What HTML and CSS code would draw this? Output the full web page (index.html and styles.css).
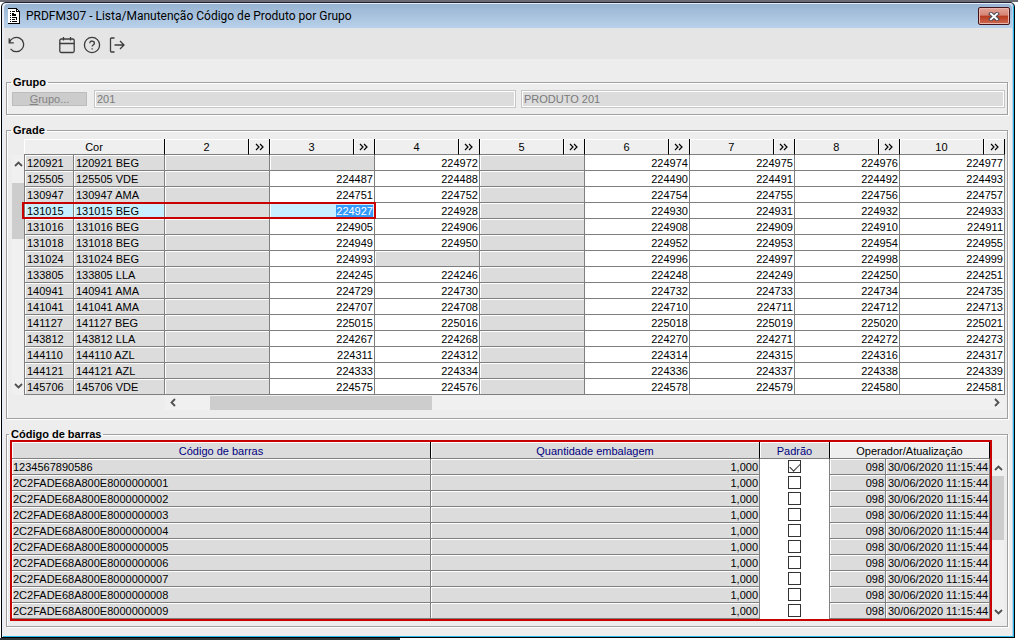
FILE: index.html
```html
<!DOCTYPE html>
<html lang="pt-BR">
<head>
<meta charset="UTF-8">
<meta name="viewport" content="width=device-width, initial-scale=1.0">
<title>PRDFM307 - Lista/Manutenção Código de Produto por Grupo</title>
<link rel="stylesheet" href="styles.css">
</head>
<body>

<div class="window">
  <!-- Title bar -->
  <header class="titlebar">
    <svg class="app-icon" width="13" height="17" viewBox="0 0 13 17" shape-rendering="crispEdges">
      <path d="M0 0h9v1h1v1h1v1h1v13H0z" fill="#fff"/>
      <path d="M0 0h9v1H0zM9 1h1v1H9zM10 2h1v1h-1zM11 3h1v13h-1zM0 15h12v1H0zM8 1h1v3H8zM8 3h3v1H8z" fill="#000"/>
      <path d="M2 3h1v1H2zM4 3h3v1H4zM2 5h1v1H2zM4 5h2v1H4zM2 7h1v1H2zM4 6h4v2H4zM2 9h1v1H2zM4 9h5v1H4zM2 11h1v1H2zM4 11h3v1H4zM8 10h1v2H8zM2 13h1v1H2zM4 13h5v1H4z" fill="#000"/>
    </svg>
    <h1>PRDFM307 - Lista/Manutenção Código de Produto por Grupo</h1>
    <button class="close" type="button" aria-label="Fechar">
      <svg width="12" height="9" viewBox="0 0 12 9">
        <path d="M3 1.8l6 5.4M9 1.8L3 7.2" stroke="#4a4a58" stroke-width="4" stroke-linecap="square"/>
        <path d="M3 1.8l6 5.4M9 1.8L3 7.2" stroke="#fff" stroke-width="2" stroke-linecap="square"/>
      </svg>
    </button>
  </header>

  <!-- Toolbar -->
  <nav class="toolbar">
    <button class="undo" type="button" aria-label="Desfazer">
      <svg width="18" height="18" viewBox="0 0 18 18"><path d="M1.2 2.2v4.6h4.6M1.4 6.8a7.2 7.2 0 1 1 1.2 6"/></svg>
    </button>
    <button type="button" aria-label="Calendário">
      <svg width="18" height="18" viewBox="0 0 18 18"><rect x="1.8" y="3" width="14.4" height="13.5" rx="1.5"/><path d="M1.8 7.5h14.4M5.5 1v3.5M12.5 1v3.5"/></svg>
    </button>
    <button type="button" aria-label="Ajuda">
      <svg width="18" height="18" viewBox="0 0 18 18"><circle cx="9" cy="9" r="7.6"/><path d="M6.8 7.2c0-3 4.6-2.8 4.6 0 0 1.7-2.3 1.7-2.3 3.3M9.1 12.2v1.3"/></svg>
    </button>
    <button type="button" aria-label="Sair">
      <svg width="18" height="18" viewBox="0 0 18 18"><path d="M6.5 2H3.5a1 1 0 0 0-1 1v12a1 1 0 0 0 1 1h3M6.5 9h9.5M12 5l4 4-4 4"/></svg>
    </button>
  </nav>

  <main class="content">
    <fieldset class="group">
      <legend>Grupo</legend>
      <div class="group-row">
        <button class="group-button" type="button" disabled><u>G</u>rupo...</button>
        <input class="field" type="text" value="201" aria-label="Código do grupo" disabled>
        <input class="field wide" type="text" value="PRODUTO 201" aria-label="Descrição do grupo" disabled>
      </div>
    </fieldset>

    <fieldset class="grade">
      <legend>Grade</legend>
      <div class="grade-row">
        <div class="scroll-v left">
          <svg width="9" height="6" viewBox="0 0 9 6"><path d="M1 5l3.5-3.5L8 5"/></svg>
          <div class="thumb"></div>
          <svg width="9" height="6" viewBox="0 0 9 6"><path d="M1 1l3.5 3.5L8 1"/></svg>
        </div>
        <div class="grid-wrap">
          <table class="grid">
            <colgroup id="grade-cols"><col class="col-code"><col class="col-name"></colgroup>
            <thead><tr id="grade-head"><th colspan="2">Cor</th></tr></thead>
            <tbody id="grade-body"></tbody>
          </table>
          <div class="row-marker"></div>
        </div>
      </div>
      <div class="scroll-h">
        <svg width="6" height="9" viewBox="0 0 6 9"><path d="M5 1L1.5 4.5 5 8"/></svg>
        <div class="thumb"></div>
        <svg width="6" height="9" viewBox="0 0 6 9"><path d="M1 1l3.5 3.5L1 8"/></svg>
      </div>
    </fieldset>

    <fieldset class="barcodes">
      <legend>Código de barras</legend>
      <div class="barcode-row">
        <div class="barcode-box">
          <table class="grid">
            <colgroup><col><col class="col-qty"><col class="col-default"><col class="col-user"><col class="col-date"></colgroup>
            <thead>
              <tr><th class="link">Código de barras</th><th class="link">Quantidade embalagem</th><th class="link">Padrão</th><th colspan="2">Operador/Atualização</th></tr>
            </thead>
            <tbody id="barcode-body"></tbody>
          </table>
        </div>
        <div class="scroll-v">
          <svg width="9" height="6" viewBox="0 0 9 6"><path d="M1 5l3.5-3.5L8 5"/></svg>
          <div class="thumb"></div>
          <svg width="9" height="6" viewBox="0 0 9 6"><path d="M1 1l3.5 3.5L8 1"/></svg>
        </div>
      </div>
    </fieldset>
  </main>
</div>
<div class="taskbar"></div>

<script>
  const sizes = [2, 3, 4, 5, 6, 7, 8, 10];

  // code, colour, then one product code per size (0 = no product)
  const grade = [
    ['120921', 'BEG', 0, 0, 224972, 0, 224974, 224975, 224976, 224977],
    ['125505', 'VDE', 0, 224487, 224488, 0, 224490, 224491, 224492, 224493],
    ['130947', 'AMA', 0, 224751, 224752, 0, 224754, 224755, 224756, 224757],
    ['131015', 'BEG', 0, 224927, 224928, 0, 224930, 224931, 224932, 224933],
    ['131016', 'BEG', 0, 224905, 224906, 0, 224908, 224909, 224910, 224911],
    ['131018', 'BEG', 0, 224949, 224950, 0, 224952, 224953, 224954, 224955],
    ['131024', 'BEG', 0, 224993, 0, 0, 224996, 224997, 224998, 224999],
    ['133805', 'LLA', 0, 224245, 224246, 0, 224248, 224249, 224250, 224251],
    ['140941', 'AMA', 0, 224729, 224730, 0, 224732, 224733, 224734, 224735],
    ['141041', 'AMA', 0, 224707, 224708, 0, 224710, 224711, 224712, 224713],
    ['141127', 'BEG', 0, 225015, 225016, 0, 225018, 225019, 225020, 225021],
    ['143812', 'LLA', 0, 224267, 224268, 0, 224270, 224271, 224272, 224273],
    ['144110', 'AZL', 0, 224311, 224312, 0, 224314, 224315, 224316, 224317],
    ['144121', 'AZL', 0, 224333, 224334, 0, 224336, 224337, 224338, 224339],
    ['145706', 'VDE', 0, 224575, 224576, 0, 224578, 224579, 224580, 224581]
  ];
  const current = { code: '131015', size: 3 };

  // Header: one column per size, followed by its expand button
  const cols = document.getElementById('grade-cols');
  const head = document.getElementById('grade-head');
  sizes.forEach(size => {
    cols.insertAdjacentHTML('beforeend', '<col><col class="col-more">');
    head.insertAdjacentHTML('beforeend',
      `<th>${size}</th><th><button class="more" type="button" aria-label="Detalhes ${size}"><svg width="9" height="8" viewBox="0 0 9 8"><path d="M1 1l3 3-3 3M5 1l3 3-3 3"/></svg></button></th>`);
  });

  // Product rows
  document.getElementById('grade-body').innerHTML = grade.map(([code, colour, ...products]) => {
    const selected = code === current.code;
    const cells = products.map((product, i) => {
      if (!product) return '<td colspan="2"></td>';
      if (selected && sizes[i] === current.size) {
        return `<td colspan="2" class="num active"><span class="selection">${product}</span></td>`;
      }
      return `<td colspan="2" class="num filled">${product}</td>`;
    }).join('');
    const mark = selected ? ' class="active"' : '';
    return `<tr><td${mark}>${code}</td><td${mark}>${code} ${colour}</td>${cells}</tr>`;
  }).join('');

  // Barcode rows
  const barcodes = ['1234567890586'];
  for (let i = 1; i <= 9; i++) {
    barcodes.push('2C2FADE68A800E800000000' + i);
  }
  document.getElementById('barcode-body').innerHTML = barcodes.map((barcode, i) =>
    `<tr><td>${barcode}</td><td class="num">1,000</td>
    <td class="check"><input type="checkbox" aria-label="Padrão ${barcode}"${i === 0 ? ' checked' : ''}></td>
    <td class="num">098</td><td>30/06/2020 11:15:44</td></tr>`
  ).join('');
</script>

</body>
</html>
```
FILE: styles.css
```css
* {
  box-sizing: border-box;
}
body {
  margin: 0;
  min-height: 100vh;
  display: flex;
  flex-direction: column;
  padding: 0 3px 0 1px;
  border-top: 2px solid #6a6a72;
  background-color: #fff;
  font-family: "Liberation Sans", Arial, sans-serif;
  font-size: 11px;
  color: #000;
}
button, input {
  margin: 0;
  padding: 0;
  font: inherit;
}
svg {
  display: block;
  fill: none;
}

/* Window frame */
.window {
  flex: 1;
  display: flex;
  flex-direction: column;
  background-color: #ededed;
  border: 1px solid #000;
  border-top-color: #223;
  border-radius: 5px 5px 0 0;
  box-shadow: inset 1px 1px #e4eefa, inset -1px -1px #29b8e8, inset -2px 0 #b9d1ea;
  padding: 1px 2px;
}
.taskbar {
  width: 400px;
  height: 2px;
  margin-left: -1px;
  background-color: #2d3538;
}
.titlebar {
  display: flex;
  align-items: center;
  height: 24px;
  padding: 0 2px 0 4px;
  background: linear-gradient(#98b4d2, #b9d1ea);
  border-radius: 4px 4px 0 0;
}
.titlebar h1 {
  flex: 1;
  margin: 0 0 0 5px;
  font: 12px Roboto, "Open Sans", sans-serif;
}
.close {
  display: flex;
  align-items: center;
  justify-content: center;
  width: 32px;
  height: 18px;
  border: 1px solid #43141c;
  border-radius: 2px;
  box-shadow: inset 0 0 0 1px #eab5aa;
  background: linear-gradient(#e3a297, #d58475 45%, #b8391f 50%, #cc6a52);
}

/* Toolbar */
.toolbar {
  display: flex;
  align-items: center;
  gap: 7px;
  height: 31px;
  padding: 2px 4px 0;
  background-color: #e5e5e5;
}
.toolbar button {
  border: 0;
  background: none;
}
.toolbar svg {
  stroke: #3c3c3c;
  stroke-width: 1.3;
}
.toolbar .undo {
  margin-right: 25px;
}

/* Panels */
.content {
  display: flex;
  flex-direction: column;
  gap: 9px;
  padding: 17px 4px 9px 2px;
}
fieldset {
  min-width: 0;
  margin: 0;
  padding: 0 2px 0 5px;
  border: 1px solid #a0a0a0;
  box-shadow: 1px 1px #fff, inset 1px 1px #fff;
}
legend {
  margin-left: -1px;
  padding: 0 2px;
  line-height: 12px;
  font-weight: bold;
}
.group-row {
  display: flex;
  align-items: center;
  gap: 5px;
  padding: 2px 0 6px;
}
.group-button {
  width: 75px;
  height: 14px;
  margin-right: 2px;
  line-height: 12px;
  border: 1px solid #bdbdbd;
  background-color: #ccc;
  color: #848484;
}
.field {
  flex: 422;
  min-width: 0;
  height: 18px;
  padding: 0 2px;
  border: 1px solid #c6c6c6;
  box-shadow: inset 0 0 0 1px #fff;
  background-color: #dcdcdc;
  color: #7a7a7a;
}
.field.wide {
  flex: 485;
}

/* Tables */
.grid {
  width: 100%;
  table-layout: fixed;
  border-collapse: separate;
  border-spacing: 0;
}
.grid th {
  height: 16px;
  padding: 0;
  line-height: 14px;
  font-weight: normal;
  border-right: 1px solid #000;
  border-bottom: 1px solid #7f7f7f;
  box-shadow: inset 1px 1px #fff;
  background-color: #efefef;
}
.grid td {
  height: 16px;
  padding: 2px 2px 0;
  line-height: 13px;
  white-space: nowrap;
  border-right: 1px solid #7f7f7f;
  border-bottom: 1px solid #7f7f7f;
  box-shadow: inset 1px 1px #fff;
  background-color: #dcdcdc;
}
.grid .num {
  padding-right: 1px;
  text-align: right;
}
.grid .filled {
  background-color: #fff;
}
.grid .active {
  background-color: #c8efff;
}
.selection {
  display: block;
  width: fit-content;
  margin-left: auto;
  background-color: #3399ff;
  color: #fff;
}

/* Grade */
.grade {
  padding-top: 3px;
  padding-bottom: 8px;
}
.grade-row {
  display: flex;
}
.grid-wrap {
  flex: 1;
  position: relative;
}
.grade .grid td:first-child {
  border-left: 1px solid #7f7f7f;
}
.col-code {
  width: 50px;
}
.col-name {
  width: 91px;
}
.col-more {
  width: 21px;
}
.more {
  display: flex;
  align-items: center;
  justify-content: center;
  width: 100%;
  height: 14px;
  border: 0;
  background: none;
}
.more svg {
  stroke: #000;
  stroke-width: 1.2;
}
/* Frame from the row's first cell to the current size */
.row-marker {
  position: absolute;
  top: 63px;
  left: -2px;
  width: calc(144px + (100% - 141px) / 4);
  height: 17px;
  border: 2px solid #c80000;
  pointer-events: none;
}

/* Scroll bars */
.scroll-v, .scroll-h {
  display: flex;
  align-items: center;
  background-color: #f0f0f0;
}
.scroll-v svg, .scroll-h svg {
  stroke: #505050;
  stroke-width: 1.8;
}
.scroll-v {
  flex-direction: column;
  width: 12px;
  margin-top: 19px;
  padding: 6px 0;
}
.scroll-v .thumb {
  width: 100%;
  height: 64px;
  margin: 5px 0 auto;
  background-color: #cdcdcd;
}
.scroll-v.left {
  margin-top: 16px;
}
.scroll-v.left .thumb {
  height: 56px;
  margin-top: 16px;
}
.scroll-h {
  height: 15px;
  margin-left: 153px;
  padding: 0 5px;
}
.scroll-h .thumb {
  width: 222px;
  height: 14px;
  margin: 0 auto 0 34px;
  background-color: #cdcdcd;
}

/* Barcodes */
.barcodes {
  padding-left: 3px;
  padding-right: 3px;
  padding-bottom: 5px;
}
.barcode-row {
  display: flex;
}
.barcode-box {
  flex: 1;
  border: 2px solid #c80000;
}
.barcodes .grid th {
  height: 17px;
  padding-top: 2px;
}
.barcodes .grid .link {
  background-color: #dcdcdc;
  color: #000080;
}
.barcodes .grid td:first-child {
  padding-left: 1px;
}
.col-qty {
  width: 329px;
}
.col-default {
  width: 70px;
}
.col-user {
  width: 56px;
}
.col-date {
  width: 104px;
}
.barcodes .grid .check {
  padding: 1px 0 0;
  vertical-align: top;
  border-bottom: 0;
  background-color: #fff;
}
.check input {
  appearance: none;
  display: block;
  width: 13px;
  height: 13px;
  margin: 0 auto;
  border: 1px solid #333;
  background-color: #fff;
}
.check input:checked::before {
  content: "";
  display: block;
  width: 9px;
  height: 5px;
  margin: 2px 0 0 1px;
  border: solid #333;
  border-width: 0 0 1px 1px;
  transform: rotate(-45deg);
}
```
